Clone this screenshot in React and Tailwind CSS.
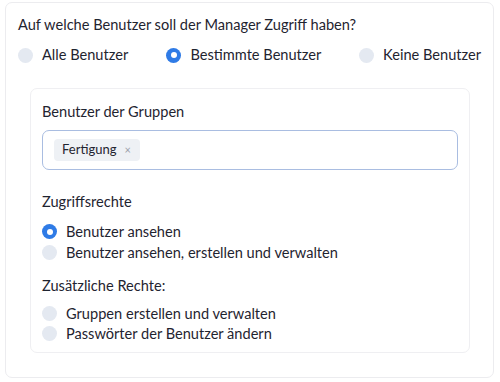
export default function App() {
  const Radio = ({ checked }) =>
    checked ? (
      <span className="w-[15px] h-[15px] rounded-full bg-[#2f7be6] flex items-center justify-center shrink-0">
        <span className="w-[6px] h-[6px] rounded-full bg-white" />
      </span>
    ) : (
      <span className="w-[15px] h-[15px] rounded-full bg-[#e4e9f1] shrink-0" />
    );
  return (
    <div className="w-[500px] h-[382px] bg-white pt-[2px] pl-[5px] pr-[6px] text-[#1f2430] text-[14.6px]" style={{ fontFamily: 'Lato, "Noto Sans", sans-serif' }}>
      <div className="h-[376px] border border-[#ececef] rounded-[7px] pt-[12px] px-[12px]">
        <div className="leading-[20px] whitespace-nowrap">Auf welche Benutzer soll der Manager Zugriff haben?</div>
        <div className="flex items-center mt-[10px] leading-[20px] whitespace-nowrap">
          <div className="flex items-center gap-[9px] w-[151px]">
            <Radio />
            <span>Alle Benutzer</span>
          </div>
          <div className="flex items-center gap-[9px] w-[196px]">
            <Radio checked />
            <span>Bestimmte Benutzer</span>
          </div>
          <div className="flex items-center gap-[9px]">
            <Radio />
            <span>Keine Benutzer</span>
          </div>
        </div>
        <div className="mt-[23px] ml-[12px] mr-[11px] h-[265px] border border-[#efeff2] rounded-[7px] pt-[13px] px-[11px]">
          <div className="leading-[20px]">Benutzer der Gruppen</div>
          <div className="mt-[8px] h-[40px] border border-[#a9bde1] rounded-[7px] flex items-center px-[11px]">
            <span className="bg-[#eef1f5] rounded-[4px] h-[22px] flex items-center pl-[8px] pr-[9px] text-[13px]">
              Fertigung
              <span className="ml-[8px] text-[11px] text-[#9aa0aa]">×</span>
            </span>
          </div>
          <div className="mt-[22px] leading-[20px]">Zugriffsrechte</div>
          <div className="mt-[10px] flex flex-col gap-[2px] leading-[19px]">
            <div className="flex items-center gap-[9px]"><Radio checked /><span>Benutzer ansehen</span></div>
            <div className="flex items-center gap-[9px]"><Radio /><span>Benutzer ansehen, erstellen und verwalten</span></div>
          </div>
          <div className="mt-[14px] leading-[20px]">Zusätzliche Rechte:</div>
          <div className="mt-[8px] flex flex-col gap-[1px] leading-[19px]">
            <div className="flex items-center gap-[9px]"><Radio /><span>Gruppen erstellen und verwalten</span></div>
            <div className="flex items-center gap-[9px]"><Radio /><span>Passwörter der Benutzer ändern</span></div>
          </div>
        </div>
      </div>
    </div>
  );
}
